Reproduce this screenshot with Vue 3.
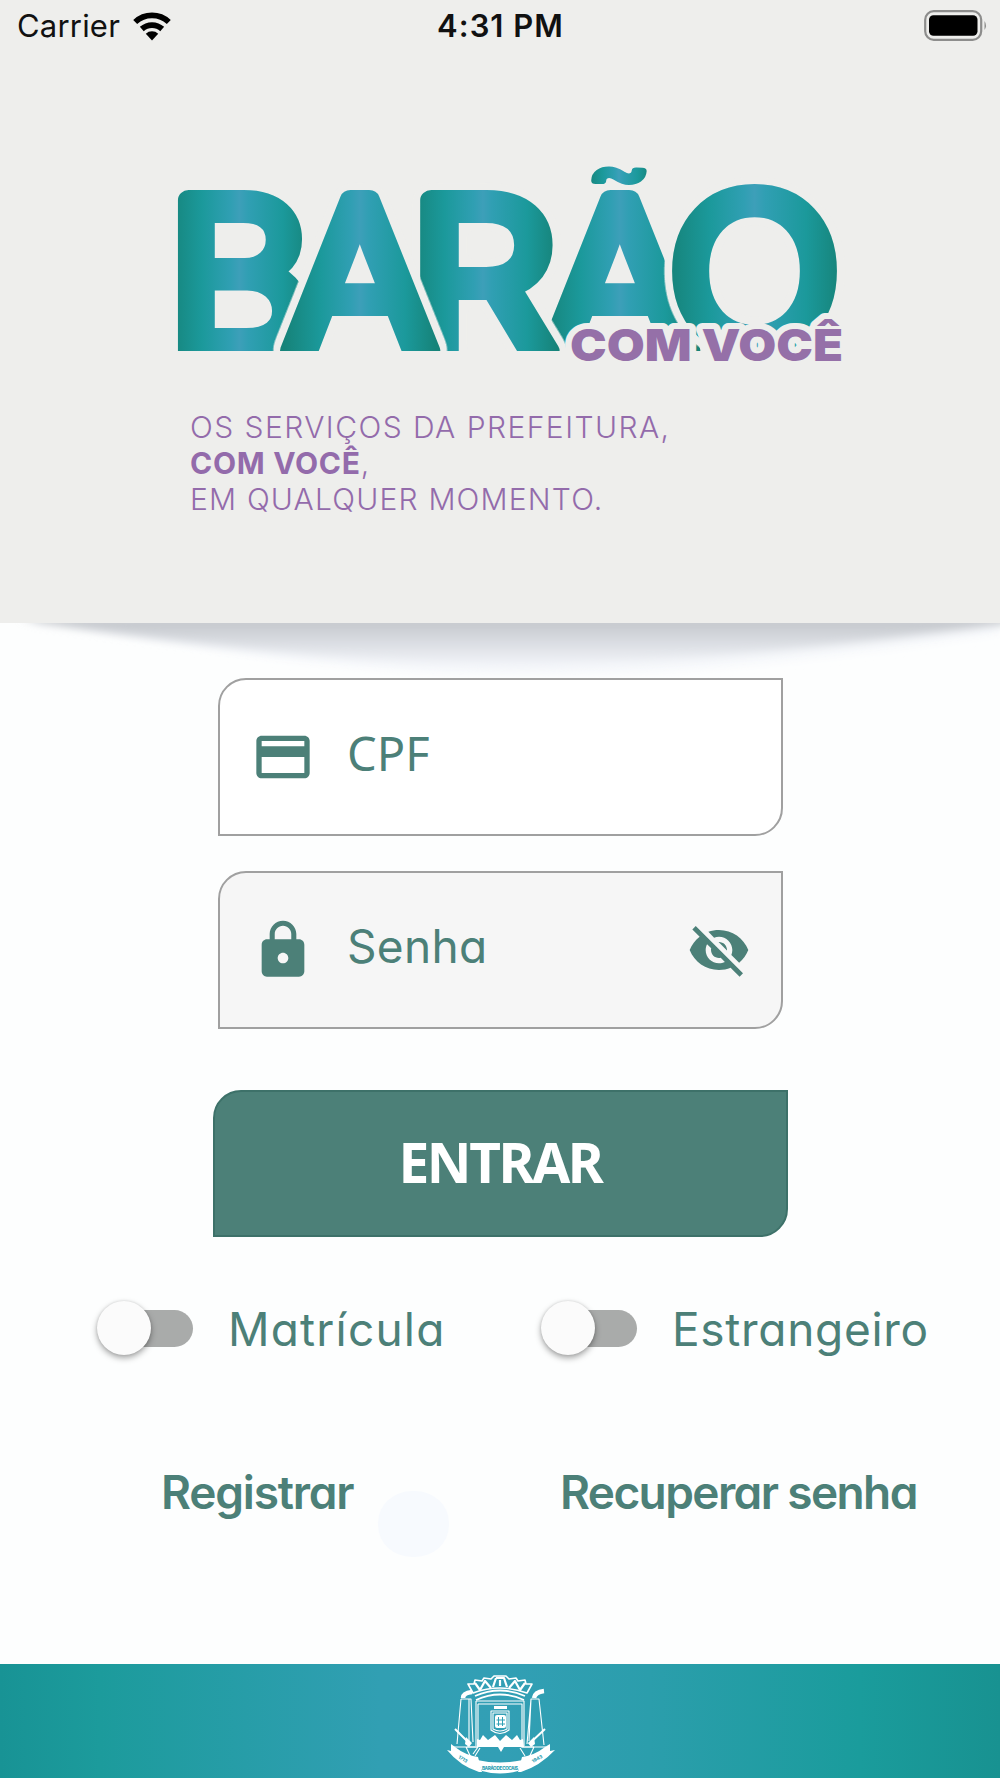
<template>
  <div class="login-page">
    <header class="login-header">
      <div class="status-bar">
        <div class="status-left">
          <span class="carrier">Carrier</span>
          <svg class="wifi" viewBox="0 0 40 30">
            <path d="M20 29.5 L13.8 22.8 A9 9 0 0 1 26.2 22.8 Z" fill="#000" />
            <path d="M9.8 18 A15.2 15.2 0 0 1 30.2 18" class="wifi-arc" />
            <path d="M3.2 11 A24.6 24.6 0 0 1 36.8 11" class="wifi-arc" />
          </svg>
        </div>
        <span class="clock">4:31 PM</span>
        <svg class="battery" viewBox="0 0 64 32">
          <rect x="1.2" y="1.2" width="56" height="28.6" rx="8.5" fill="none" stroke="#8d8d8c" stroke-width="2.2" />
          <rect x="5" y="5.3" width="48.5" height="20.4" rx="4.5" fill="#000" />
          <path d="M60.5 11 Q63.5 15.5 60.5 20 Z" fill="#8d8d8c" />
        </svg>
      </div>

      <svg class="logo" viewBox="170 150 690 230">
        <defs>
          <linearGradient id="letterFill">
            <stop offset="0" stop-color="#168379" />
            <stop offset="0.24" stop-color="#1b999b" />
            <stop offset="0.44" stop-color="#309fb3" />
            <stop offset="0.5" stop-color="#3d9fb9" />
            <stop offset="0.56" stop-color="#309fb3" />
            <stop offset="0.8" stop-color="#1b999b" />
            <stop offset="1" stop-color="#168379" />
          </linearGradient>
          <filter id="halo" x="-20%" y="-20%" width="140%" height="140%" color-interpolation-filters="sRGB">
            <feGaussianBlur in="SourceAlpha" stdDeviation="6" result="spread" />
            <feComponentTransfer in="spread" result="mask">
              <feFuncA type="linear" slope="18" intercept="-1.4" />
            </feComponentTransfer>
            <feFlood flood-color="#eeeeec" />
            <feComposite in2="mask" operator="in" result="edge" />
            <feMerge>
              <feMergeNode in="edge" />
              <feMergeNode in="SourceGraphic" />
            </feMerge>
          </filter>
          <clipPath id="baseline">
            <rect x="170" y="150" width="690" height="201" />
          </clipPath>
        </defs>
        <g clip-path="url(#baseline)">
          <g v-for="letter in letters" :key="letter.id" :transform="`translate(${letter.x} ${letter.y}) scale(${letter.sx} ${letter.sy})`">
            <text class="letter" :class="{ halo: letter.halo }">{{ letter.char }}</text>
          </g>
        </g>
        <g transform="translate(619 197) scale(1.3 1)">
          <text class="tilde">~</text>
        </g>
        <text class="logo-sub" x="570" y="361" textLength="273" lengthAdjust="spacingAndGlyphs">COM VOCÊ</text>
      </svg>

      <div class="tagline">
        <div class="line-one">OS SERVIÇOS DA PREFEITURA,</div>
        <div class="line-two"><b>COM VOCÊ</b>,</div>
        <div class="line-three">EM QUALQUER MOMENTO.</div>
      </div>
    </header>

    <main class="login-main">
      <svg class="header-shadow" viewBox="0 0 1000 75" preserveAspectRatio="none">
        <defs>
          <linearGradient id="shadowFill" x1="0" y1="0" x2="0" y2="1">
            <stop offset="0" stop-color="#bfc2c7" />
            <stop offset="0.5" stop-color="#d9dce1" />
            <stop offset="1" stop-color="#f1f3f8" />
          </linearGradient>
          <filter id="soft" x="-5%" y="-30%" width="110%" height="160%">
            <feGaussianBlur stdDeviation="4" />
          </filter>
        </defs>
        <path d="M60 0 Q300 48 500 52 T1000 10 V0 Z" fill="#f6f8fb" filter="url(#soft)" />
        <path d="M20 -6 L40 0 Q330 42 520 42 T1010 0 V-6 Z" fill="url(#shadowFill)" filter="url(#soft)" />
      </svg>

      <form class="login-form" @submit.prevent>
        <label class="field">
          <svg class="icon" viewBox="0 0 24 24">
            <path d="M20 4H4c-1.11 0-1.99.89-1.99 2L2 18c0 1.11.89 2 2 2h16c1.11 0 2-.89 2-2V6c0-1.11-.89-2-2-2zm0 14H4v-6h16v6zm0-10H4V6h16v2z" />
          </svg>
          <span class="field-label cpf">CPF</span>
        </label>

        <label class="field password">
          <svg class="icon" viewBox="0 0 24 24">
            <path d="M18 8h-1V6c0-2.76-2.24-5-5-5S7 3.24 7 6v2H6c-1.1 0-2 .9-2 2v10c0 1.1.9 2 2 2h12c1.1 0 2-.9 2-2V10c0-1.1-.9-2-2-2zm-6 9c-1.1 0-2-.9-2-2s.9-2 2-2 2 .9 2 2-.9 2-2 2zm3.1-9H8.9V6c0-1.71 1.39-3.1 3.1-3.1s3.1 1.39 3.1 3.1v2z" />
          </svg>
          <span class="field-label senha">Senha</span>
          <svg class="icon eye" viewBox="0 0 24 24">
            <path d="M12 7c2.76 0 5 2.24 5 5 0 .65-.13 1.26-.36 1.83l2.92 2.92c1.51-1.26 2.7-2.89 3.43-4.75-1.73-4.39-6-7.5-11-7.5-1.4 0-2.74.25-3.98.7l2.16 2.16C10.74 7.13 11.35 7 12 7zM2 4.27l2.28 2.28.46.46C3.08 8.3 1.78 10.02 1 12c1.73 4.39 6 7.5 11 7.5 1.55 0 3.03-.3 4.38-.84l.42.42L19.73 22 21 20.73 3.27 3 2 4.27zM7.53 9.8l1.55 1.55c-.05.21-.08.43-.08.65 0 1.66 1.34 3 3 3 .22 0 .44-.03.65-.08l1.55 1.55c-.67.33-1.41.53-2.2.53-2.76 0-5-2.24-5-5 0-.79.2-1.53.53-2.2zm4.31-.78l3.15 3.15.02-.16c0-1.66-1.34-3-3-3l-.17.01z" />
          </svg>
        </label>

        <button class="enter-button" type="submit"><span>ENTRAR</span></button>
      </form>

      <div class="switches">
        <div v-for="item in switches" :key="item.label" class="switch-item" @click="item.on = !item.on">
          <span class="switch" :class="{ on: item.on }"><span class="thumb"></span></span>
          <span class="switch-label" :class="item.name">{{ item.label }}</span>
        </div>
      </div>

      <div class="links">
        <a class="register">Registrar</a>
        <a class="recover">Recuperar senha</a>
        <span class="touch-spot"></span>
      </div>
    </main>

    <footer class="login-footer">
      <svg class="crest" viewBox="0 0 140 114">
        <g fill="none" stroke="#fff" stroke-width="1.1" stroke-linejoin="round">
          <!-- crown -->
          <path d="M43 29 L38 20 L44 20 L45 16 L52 17 L54 14 L61 15 L64 12 L76 12 L79 15 L86 14 L88 17 L95 16 L96 20 L102 20 L97 29 Q70 19 43 29Z" stroke-width="1.6" />
          <path d="M45 19 L50 26 L55 17 L61 24 M66 14 L63 23 M66 14 H74 L77 23 M79 24 L85 17 L90 26 L95 19 M70 16 V22" stroke-width="2.2" />
          <path d="M45 32 Q70 21 95 32 M46 36 Q70 25 94 36" stroke-width="1.8" />
          <!-- shield -->
          <path d="M46 37 H94 V82 M46 37 V82 M48 40 H92 V78 M48 40 V78 M37 83 H48 M92 83 H104 M50 84 L45 92 M90 84 L95 92" />
          <path d="M61 47 H79 V66 Q70 73 61 66Z M63 49 H77 V65 Q70 69 63 65Z" />
          <!-- towers -->
          <path d="M31 35 H41 L43 78 M31 35 L27 80 M39 35 L39 77 M99 77 L101 35 H109 L114 81 M101 35 L97 80" />
          <path d="M33 34 Q33 29 42 28 M104 34 Q105 28 114 27" stroke-width="4.5" />
          <path d="M25 65 L40 80 M115 65 L99 80" stroke-width="2" />
          <path d="M23 83 H48 L43 90 M91 83 H116 M36 83 L43 98 M104 83 L97 98" />
        </g>
        <g fill="#fff">
          <rect x="64" y="42" width="13" height="3" />
          <rect x="65" y="51" width="11" height="13" rx="2" />
          <path d="M47 75 L50 76 L53 71 L58 76 L65 71 L70 77 L76 71 L82 76 L87 71 L90 76 L93 75 L94 83 H74 L71 88 L68 83 H47Z" />
          <path d="M36 73 L42 79 L39 83 L35 80 Z M104 73 L98 79 L101 83 L105 80Z" />
          <path d="M21 80 L25 83 Q35 91 48 93 L52 108 L49 108 Q30 102 17 86 L21 87Z M120 80 L115 83 Q105 91 92 93 L88 108 L91 108 Q110 102 125 86 L120 87Z" />
          <path d="M47 96 Q70 101 93 96 L88 107 Q70 112 52 107Z" />
        </g>
        <path d="M68.500 53 V62 M72.500 53 V62 M66.500 56 H75 M66.500 60 H75" stroke="#31a0b5" stroke-width="1" />
        <text class="crest-text" x="70" y="106" text-anchor="middle" textLength="36">BARÃO DE COCAIS</text>
        <text class="crest-text" transform="translate(28 94) rotate(30)">1713</text>
        <text class="crest-text" transform="translate(103 99) rotate(-30)">1943</text>
      </svg>
    </footer>
  </div>
</template>

<script setup>
import { ref } from 'vue';

// paint order matters: each halo cuts the gap into the letter painted before it
const letters = [
  { id: 'b', char: 'B', x: 239.5, y: 351, sx: 1.07, sy: 1, halo: false },
  { id: 'a2', char: 'A', x: 620, y: 351, sx: 1.08, sy: 1, halo: false },
  { id: 'r', char: 'R', x: 483, y: 351, sx: 1.12, sy: 1, halo: true },
  { id: 'a1', char: 'A', x: 360, y: 351, sx: 1.08, sy: 1, halo: true },
  { id: 'o', char: 'O', x: 754.5, y: 346, sx: 1.09, sy: 0.99, halo: true }
];

const switches = ref([
  { name: 'matricula', label: 'Matrícula', on: false },
  { name: 'estrangeiro', label: 'Estrangeiro', on: false }
]);
</script>

<style>
body {
  margin: 0;
  background: #fdfdfd;
}
</style>

<style scoped>
.login-page {
  display: flex;
  flex-direction: column;
  width: 1000px;
  height: 1778px;
  overflow: hidden;
  background: #fdfefe;
  color: #4c8078;
  font-family: Inter, "Noto Sans", sans-serif;
  font-feature-settings: "cv11";
}

.login-header {
  height: 623px;
  flex-shrink: 0;
  background: #eeeeec;
}

.status-bar {
  display: grid;
  grid-template-columns: 1fr auto 1fr;
  align-items: center;
  height: 51px;
  padding: 0 12px 0 17px;
  color: #111;
  font-size: 31px;
  font-feature-settings: normal;
}

.status-left {
  display: flex;
  align-items: center;
  gap: 12px;
}

.carrier {
  letter-spacing: 0.2px;
}

.wifi {
  width: 40px;
  height: 30px;
}

.wifi-arc {
  fill: none;
  stroke: #000;
  stroke-width: 5.8;
}

.clock {
  margin-left: -4px;
  font-weight: 600;
  letter-spacing: 1px;
}

.battery {
  width: 64px;
  height: 32px;
  justify-self: end;
}

.logo {
  display: block;
  width: 690px;
  height: 230px;
  margin: 99px 0 0 170px;
  overflow: visible;
}

.letter {
  font-size: 208px;
  font-weight: 300;
  text-anchor: middle;
  fill: url(#letterFill);
  stroke: url(#letterFill);
  stroke-width: 20px;
  stroke-linejoin: round;
}

.halo {
  filter: url(#halo);
}

.tilde {
  font-size: 74px;
  font-weight: 300;
  text-anchor: middle;
  fill: url(#letterFill);
  stroke: url(#letterFill);
  stroke-width: 7px;
  stroke-linejoin: round;
}

.logo-sub {
  font-size: 44px;
  font-weight: 900;
  fill: #9570a8;
  stroke: #eeeeec;
  stroke-width: 12px;
  stroke-linejoin: round;
  paint-order: stroke;
}

.tagline {
  margin: 29px 0 0 190px;
  color: #936bab;
  font-size: 30px;
  font-weight: 300;
  line-height: 36px;
  white-space: nowrap;
}

.line-one {
  letter-spacing: 1.45px;
}

.line-two b {
  font-weight: 700;
  letter-spacing: 0.7px;
}

.line-three {
  letter-spacing: 1.2px;
}

.login-main {
  height: 1041px;
  flex-shrink: 0;
}

.header-shadow {
  display: block;
  width: 1000px;
  height: 75px;
  margin-bottom: -20px;
}

.login-form {
  position: relative;
  display: flex;
  flex-direction: column;
  align-items: center;
}

.field {
  box-sizing: border-box;
  display: flex;
  align-items: center;
  width: 565px;
  height: 158px;
  margin-left: 1px;
  padding: 0 30px 0 31px;
  border: 2px solid #a0a0a0;
  border-radius: 28px 0;
  background: #fff;
}

.field + .field {
  margin-top: 35px;
}

.password {
  background: #f6f6f6;
}

.icon {
  width: 64px;
  height: 64px;
  fill: #4c8078;
  flex-shrink: 0;
}

.eye {
  margin-left: auto;
}

.field-label {
  margin: 0 0 9px 32px;
  font-size: 46px;
  line-height: 56px;
}

.cpf {
  font-family: "Noto Sans", sans-serif;
  font-size: 47px;
}

.senha {
  letter-spacing: 0.3px;
}

.enter-button {
  width: 575px;
  height: 147px;
  margin-top: 61px;
  padding: 0 0 4px;
  border: 2px solid #3d7169;
  border-radius: 28px 0;
  background: #4c8078;
  color: #fff;
  font: 700 55px/60px "Noto Sans", sans-serif;
  letter-spacing: -2.4px;
}

.switches {
  display: flex;
  height: 56px;
  margin-top: 63px;
  padding-left: 97px;
}

.switch-item {
  display: flex;
  align-items: center;
  width: 444px;
}

.switch {
  display: flex;
  align-items: center;
  width: 80px;
  height: 37px;
  margin-left: 16px;
  border-radius: 19px;
  background: #a9abaa;
}

.thumb {
  width: 54px;
  height: 54px;
  margin-left: -16px;
  border-radius: 50%;
  background: #fbfbfb;
  box-shadow: 0 3px 6px rgba(0, 0, 0, 0.35), 0 0 3px rgba(0, 0, 0, 0.12);
}

.switch.on .thumb {
  margin-left: 42px;
}

.switch-label {
  margin: 2px 0 0 35px;
  font-size: 46px;
  line-height: 56px;
}

.matricula {
  letter-spacing: 1.2px;
}

.estrangeiro {
  letter-spacing: 0.7px;
}

.links {
  position: relative;
  display: flex;
  height: 60px;
  margin-top: 106px;
  padding-left: 161px;
  font-size: 46px;
  font-weight: 600;
  line-height: 60px;
  white-space: nowrap;
}

.register {
  width: 399px;
  letter-spacing: -1.2px;
}

.recover {
  letter-spacing: -1.6px;
}

.touch-spot {
  position: absolute;
  left: 378px;
  top: 29px;
  width: 71px;
  height: 66px;
  border-radius: 48%;
  background: #f7fafe;
}

.login-footer {
  display: flex;
  justify-content: center;
  height: 114px;
  flex-shrink: 0;
  background: linear-gradient(90deg, #189395 0%, #1c9b9c 10%, #319fb3 38%, #329fb5 50%, #2b9eac 65%, #1a9c9c 86%, #189291 100%);
}

.crest {
  width: 140px;
  height: 114px;
}

.crest-text {
  font-size: 4.6px;
  font-weight: 800;
  fill: #319fb3;
}
</style>
